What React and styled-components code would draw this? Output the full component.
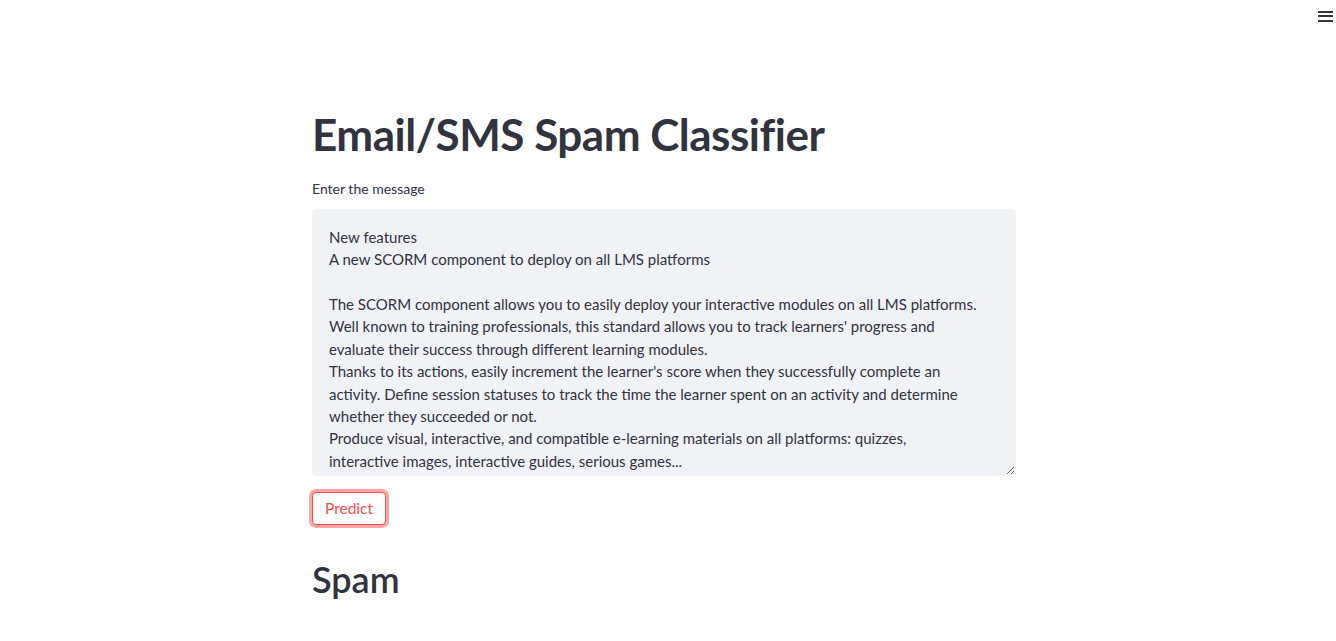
import React from "react";
import styled, { createGlobalStyle } from "styled-components";

const GlobalStyle = createGlobalStyle`
  html, body { margin: 0; padding: 0; background: #ffffff; }
  body {
    font-family: "Source Sans Pro", Lato, "Noto Sans", sans-serif;
    color: #31333f;
    -webkit-font-smoothing: antialiased;
  }
  * { box-sizing: border-box; }
`;

const Page = styled.div`
  min-height: 641px;
`;

const Header = styled.header`
  display: flex;
  justify-content: flex-end;
  align-items: flex-start;
  height: 40px;
  padding: 11px 3px 0 0;
`;

const MenuButton = styled.button`
  width: 15px;
  height: 10.5px;
  padding: 0;
  border: none;
  background: transparent;
  display: flex;
  flex-direction: column;
  justify-content: space-between;
  cursor: pointer;
  span {
    display: block;
    height: 1.6px;
    background: #31333f;
  }
`;

const Content = styled.div`
  padding-right: 8px;
`;

const Main = styled.main`
  max-width: 704px;
  margin: 0 auto;
  padding-top: 56px;
  display: flex;
  flex-direction: column;
`;

const Title = styled.h1`
  margin: 0;
  padding: 12px 0 17px;
  font-size: 44px;
  font-weight: 700;
  line-height: 1.2;
  letter-spacing: -0.5px;
`;

const Label = styled.label`
  font-size: 14px;
  line-height: 1.6;
  margin-bottom: 9px;
  display: block;
`;

const TextArea = styled.textarea`
  display: block;
  width: 100%;
  height: 267px;
  margin: 0;
  padding: 15.5px 16px 16px;
  border: 1px solid #f0f2f6;
  border-radius: 4px;
  background: #f0f2f6;
  color: #31333f;
  font-family: inherit;
  font-size: 15px;
  line-height: 22.4px;
  white-space: pre-wrap;
  outline: none;
`;

const ButtonRow = styled.div`
  margin-top: 16px;
  display: flex;
`;

const Button = styled.button`
  font-family: inherit;
  font-size: 15.5px;
  line-height: 1.6;
  padding: 3px 12px;
  border: 1px solid #ff4b4b;
  border-radius: 4px;
  background: #ffffff;
  color: #ff4b4b;
  box-shadow: 0 0 0 3px rgba(255, 75, 75, 0.5);
  cursor: pointer;
`;

const Result = styled.h2`
  margin: 0;
  padding: 33px 0 16px;
  font-size: 36px;
  font-weight: 600;
  line-height: 1.2;
`;

const message = [
  "New features",
  "A new SCORM component to deploy on all LMS platforms",
  "",
  "The SCORM component allows you to easily deploy your interactive modules on all LMS platforms.",
  "Well known to training professionals, this standard allows you to track learners' progress and",
  "evaluate their success through different learning modules.",
  "Thanks to its actions, easily increment the learner's score when they successfully complete an",
  "activity. Define session statuses to track the time the learner spent on an activity and determine",
  "whether they succeeded or not.",
  "Produce visual, interactive, and compatible e-learning materials on all platforms: quizzes,",
  "interactive images, interactive guides, serious games...",
].join("\n");

export default function App() {
  return (
    <Page>
      <GlobalStyle />
      <Header>
        <MenuButton aria-label="Menu">
          <span />
          <span />
          <span />
        </MenuButton>
      </Header>
      <Content>
        <Main>
          <Title>Email/SMS Spam Classifier</Title>
          <Label htmlFor="msg">Enter the message</Label>
          <TextArea id="msg" defaultValue={message} spellCheck={false} />
          <ButtonRow>
            <Button>Predict</Button>
          </ButtonRow>
          <Result>Spam</Result>
        </Main>
      </Content>
    </Page>
  );
}
